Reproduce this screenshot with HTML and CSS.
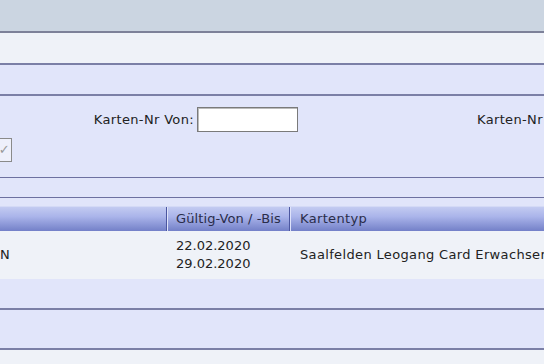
FILE: index.html
```html
<!DOCTYPE html>
<html lang="de">
<head>
    <meta charset="UTF-8">
    <title>Karten Suche</title>
    <link rel="stylesheet" href="styles.css">
</head>
<body>
    <div class="topbar"></div>
    <div class="subbar"></div>
    <div class="panel-title"></div>

    <!-- Filter -->
    <div class="filter">
        <div class="filter-row">
            <label class="lbl lbl-von">Karten-Nr Von:</label>
            <input type="text" class="field">
            <label class="lbl lbl-bis">Karten-Nr</label>
        </div>
        <div class="check-row">
            <span class="checkbox">&#10003;</span>
        </div>
    </div>
    <div class="spacer"></div>

    <!-- Result table -->
    <div class="result">
        <div class="grid-head">
            <div class="hcell c1"></div>
            <div class="hcell c2">Gültig-Von / -Bis</div>
            <div class="hcell c3">Kartentyp</div>
        </div>
        <div class="grid-row">
            <div class="cell c1">N</div>
            <div class="cell c2">22.02.2020<br>29.02.2020</div>
            <div class="cell c3">Saalfelden Leogang Card Erwachsene</div>
        </div>
    </div>

    <div class="band band-a"></div>
    <div class="band band-b"></div>
    <div class="footer"></div>
</body>
</html>
```

FILE: styles.css
```css
body {
    margin: 0;
    background: #eff2f8;
    font-family: 'DejaVu Sans', Verdana, sans-serif;
    font-size: 13px;
    letter-spacing: 0.35px;
    color: #222;
    overflow: hidden;
}
.topbar {
    height: 31px;
    background: #cbd5e1;
    border-bottom: 2px solid #7d8199;
}
.subbar {
    height: 30px;
    background: #eff2f8;
    border-bottom: 2px solid #7b7fa6;
}
.panel-title {
    height: 29px;
    background: #e1e5fa;
    border-bottom: 2px solid #7b7fa6;
}

/* Filter area */
.filter {
    height: 81px;
    background: #e1e5fa;
    border-bottom: 1px solid #6d71a0;
}
.filter-row {
    display: flex;
    align-items: center;
    padding-top: 11px;
    height: 25px;
}
.lbl {
    white-space: nowrap;
}
.lbl-von {
    width: 197px;
    text-align: right;
    padding-right: 3px;
    box-sizing: border-box;
}
.field {
    width: 101px;
    height: 25px;
    box-sizing: border-box;
    border: 1px solid #7a7a7a;
    box-shadow: inset 1px 1px 0 #bbb;
    background: #fff;
    margin: 0;
}
.lbl-bis {
    margin-left: 179px;
}
.check-row {
    padding-top: 6px;
}
.checkbox {
    display: block;
    width: 24px;
    height: 22px;
    margin-left: -15px;
    border: 1px solid #8a8a8a;
    background: #eef0fb;
    color: #999;
    font-size: 13px;
    line-height: 22px;
    text-align: right;
    padding-right: 1px;
}
.spacer {
    height: 19px;
    background: #e1e5fa;
    border-bottom: 1px solid #6d71a0;
}

/* Result table */
.result {
    background: #e1e5fa;
    padding-top: 8px;
}
.grid-head, .grid-row {
    display: grid;
    grid-template-columns: 167px 123px 1fr;
}
.grid-head {
    height: 25px;
    background: linear-gradient(#c3cbf1, #aab4ea 40%, #7380c8);
    border-top: 1px solid #d4daf6;
    box-sizing: border-box;
}
.hcell {
    line-height: 24px;
    padding-left: 8px;
    color: #2a2d4a;
    white-space: nowrap;
    border-left: 1px solid #dfe3fa;
}
.hcell.c1 {
    border-left: none;
    border-right: 1px solid #4b56a0;
}
.hcell.c2 {
    border-right: 1px solid #4b56a0;
    letter-spacing: 0.1px;
}
.hcell.c3 {
    padding-left: 9px;
}
.grid-row {
    height: 48px;
    background: #eff2f8;
    align-items: center;
}
.cell {
    white-space: nowrap;
    line-height: 18px;
}
.cell.c1 {
    padding-left: 0;
}
.cell.c2 {
    padding-left: 9px;
    letter-spacing: 0;
}
.cell.c3 {
    padding-left: 10px;
}
.band {
    background: #e1e5fa;
    border-bottom: 2px solid #7b7fa6;
}
.band-a {
    height: 29px;
}
.band-b {
    height: 38px;
}
.footer {
    height: 20px;
    background: #eff2f8;
}
```
